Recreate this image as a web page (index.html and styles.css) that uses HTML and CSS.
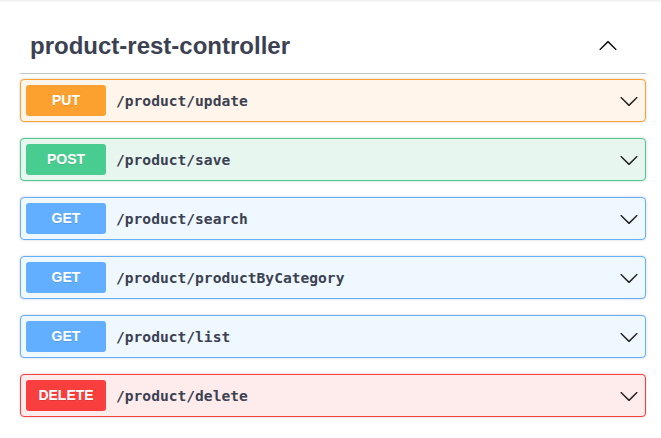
FILE: index.html
```html
<!DOCTYPE html>
<html>
<head>
<meta charset="utf-8">
<link rel="stylesheet" href="styles.css">
</head>
<body>
<div class="topshade"></div>
<div class="wrap">
  <div class="tag">
    <h3 class="tag-title">product-rest-controller</h3>
    <svg class="tag-arrow" viewBox="0 0 20 20" width="20" height="20"><path d="M17.418 6.109c.272-.268.709-.268.979 0s.271.701 0 .969l-7.908 7.83c-.27.268-.707.268-.979 0l-7.908-7.83c-.27-.268-.27-.701 0-.969.271-.268.709-.268.979 0L10 13.25l7.418-7.141z" transform="rotate(180 10 10)"/></svg>
  </div>
  <div class="ops">
    <div class="op op-put">
      <span class="method">PUT</span>
      <span class="path">/product/update</span>
      <svg class="arrow" viewBox="0 0 20 20" width="20" height="20"><path d="M17.418 6.109c.272-.268.709-.268.979 0s.271.701 0 .969l-7.908 7.83c-.27.268-.707.268-.979 0l-7.908-7.830c-.27-.268-.27-.701 0-.969.271-.268.709-.268.979 0L10 13.25l7.418-7.141z"/></svg>
    </div>
    <div class="op op-post">
      <span class="method">POST</span>
      <span class="path">/product/save</span>
      <svg class="arrow" viewBox="0 0 20 20" width="20" height="20"><path d="M17.418 6.109c.272-.268.709-.268.979 0s.271.701 0 .969l-7.908 7.83c-.27.268-.707.268-.979 0l-7.908-7.83c-.27-.268-.27-.701 0-.969.271-.268.709-.268.979 0L10 13.25l7.418-7.141z"/></svg>
    </div>
    <div class="op op-get">
      <span class="method">GET</span>
      <span class="path">/product/search</span>
      <svg class="arrow" viewBox="0 0 20 20" width="20" height="20"><path d="M17.418 6.109c.272-.268.709-.268.979 0s.271.701 0 .969l-7.908 7.83c-.27.268-.707.268-.979 0l-7.908-7.83c-.27-.268-.27-.701 0-.969.271-.268.709-.268.979 0L10 13.25l7.418-7.141z"/></svg>
    </div>
    <div class="op op-get">
      <span class="method">GET</span>
      <span class="path">/product/productByCategory</span>
      <svg class="arrow" viewBox="0 0 20 20" width="20" height="20"><path d="M17.418 6.109c.272-.268.709-.268.979 0s.271.701 0 .969l-7.908 7.83c-.27.268-.707.268-.979 0l-7.908-7.83c-.27-.268-.27-.701 0-.969.271-.268.709-.268.979 0L10 13.25l7.418-7.141z"/></svg>
    </div>
    <div class="op op-get">
      <span class="method">GET</span>
      <span class="path">/product/list</span>
      <svg class="arrow" viewBox="0 0 20 20" width="20" height="20"><path d="M17.418 6.109c.272-.268.709-.268.979 0s.271.701 0 .969l-7.908 7.83c-.27.268-.707.268-.979 0l-7.908-7.83c-.27-.268-.27-.701 0-.969.271-.268.709-.268.979 0L10 13.25l7.418-7.141z"/></svg>
    </div>
    <div class="op op-delete">
      <span class="method">DELETE</span>
      <span class="path">/product/delete</span>
      <svg class="arrow" viewBox="0 0 20 20" width="20" height="20"><path d="M17.418 6.109c.272-.268.709-.268.979 0s.271.701 0 .969l-7.908 7.83c-.27.268-.707.268-.979 0l-7.908-7.83c-.27-.268-.27-.701 0-.969.271-.268.709-.268.979 0L10 13.25l7.418-7.141z"/></svg>
    </div>
  </div>
</div>
</body>
</html>
```

FILE: styles.css
```css
* { box-sizing: border-box; }
html, body { margin: 0; padding: 0; background: #fff; }
body { font-family: "Liberation Sans", Arial, sans-serif; color: #3b4151; }

.topshade {
  height: 1px;
  background: #f0f0f0;
  box-shadow: 0 1px 2px rgba(0,0,0,0.06);
}

.wrap {
  padding: 0 15px 0 20px;
}

.tag {
  display: flex;
  align-items: center;
  height: 73px;
  padding: 17px 0 0 10px;
  border-bottom: 1px solid #c4c6cb;
}

.tag-title {
  flex: 1;
  margin: 0;
  font-size: 24px;
  line-height: 28px;
  font-weight: 700;
  color: #3b4151;
}

.tag-arrow {
  margin-right: 28px;
  fill: #111;
}

.ops {
  padding-top: 5px;
}

.op {
  display: flex;
  align-items: center;
  height: 43px;
  padding: 5px;
  border: 1px solid;
  border-radius: 4px;
  box-shadow: 0 0 3px rgba(0,0,0,0.19);
  margin-bottom: 16px;
}

.method {
  min-width: 80px;
  height: 31px;
  line-height: 31px;
  text-align: center;
  font-size: 14px;
  font-weight: 700;
  color: #fff;
  border-radius: 3px;
  text-shadow: 0 1px 0 rgba(0,0,0,0.1);
}

.path {
  flex: 1;
  padding: 0 10px;
  font-family: "DejaVu Sans Mono", "Liberation Mono", monospace;
  font-weight: 700;
  font-size: 14.6px;
  color: #3b4151;
}

.arrow {
  margin-right: 1px;
  fill: #222;
}

.op-put { background: #fff5ea; border-color: #fca130; }
.op-put .method { background: #fca130; }
.op-post { background: #e8f6f0; border-color: #49cc90; }
.op-post .method { background: #49cc90; }
.op-get { background: #eff7ff; border-color: #61affe; }
.op-get .method { background: #61affe; }
.op-delete { background: #feebeb; border-color: #f93e3e; }
.op-delete .method { background: #f93e3e; }
```
